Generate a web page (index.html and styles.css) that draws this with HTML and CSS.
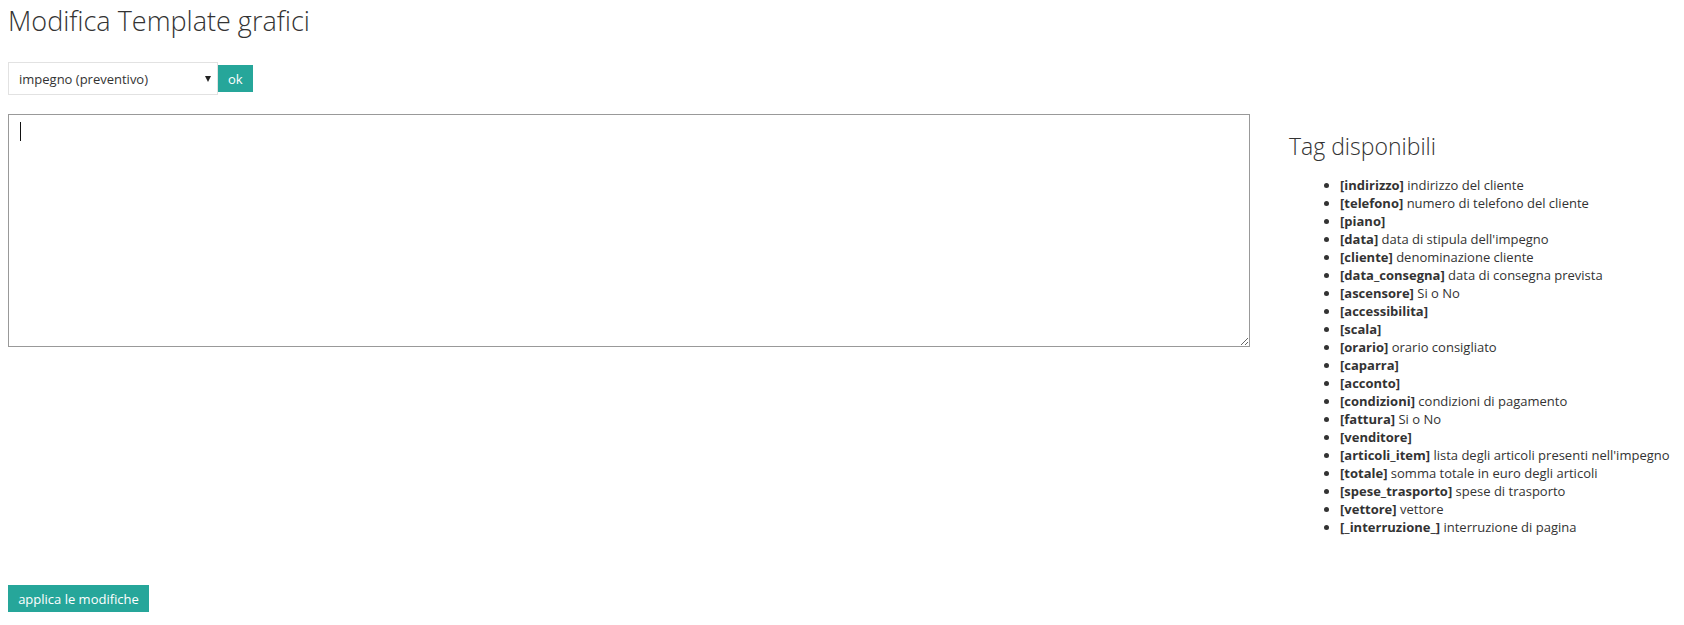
FILE: index.html
```html
<!DOCTYPE html>
<html lang="it">
<head>
    <meta charset="UTF-8">
    <title>Modifica Template grafici</title>
    <link rel="stylesheet" href="styles.css">
</head>
<body>
<div class="page">
    <h1 class="title">Modifica Template grafici</h1>

    <form class="pick">
        <div class="select-wrap">
            <select class="sel" name="template">
                <option>impegno (preventivo)</option>
                <option>impegno (definitivo)</option>
                <option>fattura</option>
            </select>
        </div>
        <button type="button" class="btn">ok</button>
    </form>

    <div class="row">
        <div class="editor">
            <textarea class="area" autofocus></textarea>
        </div>
        <div class="tags">
            <h2 class="tags-title">Tag disponibili</h2>
            <ul class="tag-list">
                <li><b>[indirizzo]</b> indirizzo del cliente</li>
                <li><b>[telefono]</b> numero di telefono del cliente</li>
                <li><b>[piano]</b></li>
                <li><b>[data]</b> data di stipula dell'impegno</li>
                <li><b>[cliente]</b> denominazione cliente</li>
                <li><b>[data_consegna]</b> data di consegna prevista</li>
                <li><b>[ascensore]</b> Si o No</li>
                <li><b>[accessibilita]</b></li>
                <li><b>[scala]</b></li>
                <li><b>[orario]</b> orario consigliato</li>
                <li><b>[caparra]</b></li>
                <li><b>[acconto]</b></li>
                <li><b>[condizioni]</b> condizioni di pagamento</li>
                <li><b>[fattura]</b> Si o No</li>
                <li><b>[venditore]</b></li>
                <li><b>[articoli_item]</b> lista degli articoli presenti nell'impegno</li>
                <li><b>[totale]</b> somma totale in euro degli articoli</li>
                <li><b>[spese_trasporto]</b> spese di trasporto</li>
                <li><b>[vettore]</b> vettore</li>
                <li><b>[_interruzione_]</b> interruzione di pagina</li>
            </ul>
        </div>
    </div>

    <button type="button" class="btn btn-apply">applica le modifiche</button>
</div>
</body>
</html>
```

FILE: styles.css
```css
* {
    margin: 0;
    padding: 0;
    box-sizing: border-box;
}

body {
    font-family: "Open Sans", "Liberation Sans", sans-serif;
    font-size: 13px;
    color: #333;
    background: #fff;
}

.page {
    padding: 3px 8px 0 8px;
}

.title {
    font-size: 27px;
    font-weight: 300;
    line-height: 35px;
    color: #333;
}

.pick {
    display: flex;
    align-items: center;
    margin-top: 24px;
}

.select-wrap {
    position: relative;
    width: 210px;
    height: 33px;
}

.select-wrap::after {
    content: "";
    position: absolute;
    right: 7px;
    top: 14px;
    border-left: 3px solid transparent;
    border-right: 3px solid transparent;
    border-top: 6px solid #222;
    pointer-events: none;
}

.sel {
    -webkit-appearance: none;
    appearance: none;
    width: 100%;
    height: 100%;
    border: 1px solid #e2e2e2;
    background: #fff;
    padding: 0 10px;
    font-family: inherit;
    font-size: 13px;
    color: #333;
    outline: none;
}

.btn {
    background: #26a69a;
    color: #fff;
    border: 0;
    height: 27px;
    padding: 0 10px;
    font-family: inherit;
    font-size: 13px;
    cursor: pointer;
}

.row {
    display: grid;
    grid-template-columns: 1242px 1fr;
    column-gap: 39px;
    margin-top: 19px;
}

.editor {
    position: relative;
}

/* cursore del campo attivo */
.editor::after {
    content: "";
    position: absolute;
    left: 12px;
    top: 8px;
    width: 1px;
    height: 19px;
    background: #111;
}

.area {
    display: block;
    width: 1242px;
    height: 233px;
    border: 1px solid #999;
    padding: 6px 12px;
    font-family: inherit;
    font-size: 14px;
    line-height: 20px;
    outline: none;
}

.tags-title {
    font-size: 23px;
    font-weight: 300;
    line-height: 35px;
    margin-top: 15px;
}

.tag-list {
    margin-top: 12px;
    padding-left: 51px;
    line-height: 18px;
}

.tag-list b {
    font-weight: 700;
}

.btn-apply {
    display: block;
    margin-top: 49px;
    width: 141px;
}
```
